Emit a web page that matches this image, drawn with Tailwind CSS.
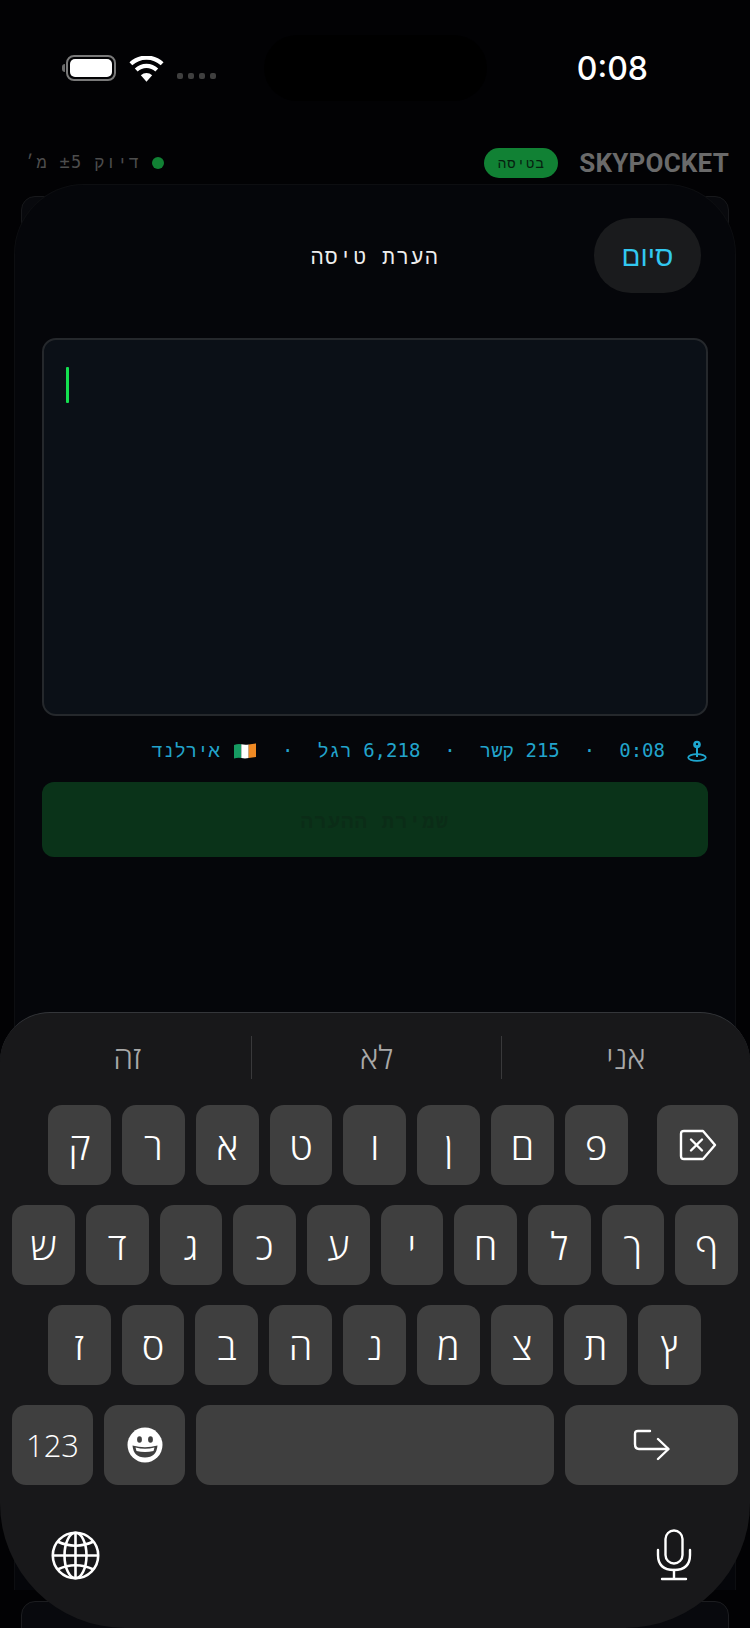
<!DOCTYPE html>
<html lang="he" dir="rtl">
<head>
  <meta charset="UTF-8" />
  <meta name="viewport" content="width=device-width, initial-scale=1.0"/>
  <title>SkyPocket</title>
  <script src="https://cdn.jsdelivr.net/npm/@tailwindcss/browser@4"></script>
</head>
<body class="bg-[#020204]">
<div class="relative w-[750px] h-[1628px] overflow-hidden bg-[#020204] font-['Liberation_Sans',sans-serif]">

  <!-- status bar -->
  <div class="absolute left-[264px] top-[35px] w-[223px] h-[66px] rounded-[33px] bg-black"></div>
  <div class="relative mt-[48px] h-[40px] flex items-center justify-between pr-[102px] pl-[62px]">
    <span class="font-['Inter',sans-serif] text-[32px] leading-[40px] font-medium text-white mt-[2px]" dir="ltr">0:08</span>
    <div class="flex items-center gap-[13px]">
      <div class="flex gap-[5px] mt-[16px]">
        <span class="w-[6px] h-[6px] rounded-[2px] bg-[#3f3f3f]"></span>
        <span class="w-[6px] h-[6px] rounded-[2px] bg-[#3f3f3f]"></span>
        <span class="w-[6px] h-[6px] rounded-[2px] bg-[#3f3f3f]"></span>
        <span class="w-[6px] h-[6px] rounded-[2px] bg-[#3f3f3f]"></span>
      </div>
      <svg width="35" height="26" viewBox="0 0 34 25" class="mt-[1px]">
        <path d="M17 25 L11.5 18.5 A8.5 8.5 0 0 1 22.5 18.5 Z" fill="#fff"/>
        <path d="M7 13.5 A14.5 14.5 0 0 1 27 13.5" fill="none" stroke="#fff" stroke-width="4"/>
        <path d="M1.8 7.5 A22 22 0 0 1 32.2 7.5" fill="none" stroke="#fff" stroke-width="4"/>
      </svg>
      <div class="flex items-center gap-[1px]" dir="ltr">
        <span class="w-[3px] h-[8px] rounded-l-[3px] bg-[#6b6b6b]"></span>
        <div class="w-[50px] h-[26px] rounded-[8px] border-2 border-[#7a7a7a] p-[2px]">
          <div class="w-full h-full rounded-[5px] bg-white"></div>
        </div>
      </div>
    </div>
  </div>

  <!-- app top bar, dimmed behind the sheet -->
  <div class="mt-[60px] h-[30px] flex items-center justify-between pr-[21px] pl-[25px]">
    <div class="flex items-center gap-[21px]">
      <span class="font-['Roboto',sans-serif] font-bold text-[26px] leading-[30px] tracking-[0.2px] text-[#6a6a6a]" dir="ltr">SKYPOCKET</span>
      <span class="w-[74px] h-[30px] rounded-full bg-[#118134] flex items-center justify-center font-['DejaVu_Sans_Mono','Liberation_Mono',monospace] text-[14px] tracking-[1px] text-[#06200f]">בטיסה</span>
    </div>
    <div class="flex items-center gap-[12px]">
      <span class="w-[12px] h-[12px] rounded-full bg-[#118134]"></span>
      <span class="font-['DejaVu_Sans_Mono','Liberation_Mono',monospace] text-[17px] tracking-[1.3px] text-[#4d4d4d]">דיוק ±5 מ׳</span>
    </div>
  </div>

  <!-- cards behind the sheet -->
  <div class="mt-[18px] mx-[21px] h-[1393px] rounded-[14px] border border-[#17181b] bg-[#08090d]"></div>
  <div class="mt-[12px] mx-[21px] h-[60px] rounded-[14px] border border-[#1c1d20] bg-[#08090d]"></div>

  <!-- note sheet -->
  <div class="absolute left-[14px] right-[14px] top-[184px] bottom-[38px] rounded-t-[70px] border border-b-0 border-[#0d0e11] bg-[#05060a]">
    <div class="mt-[33px] px-[34px] flex items-center justify-between">
      <div class="w-[107px] h-[75px] rounded-[37px] bg-[#1a1b1d] flex items-center justify-center text-[28px] text-[#32c8f0] pt-[2px]">סיום</div>
      <h1 class="font-['DejaVu_Sans_Mono','Liberation_Mono',monospace] text-[21px] tracking-[1.7px] text-[#eeeeee] pt-[5px]">הערת טיסה</h1>
      <div class="w-[107px]"></div>
    </div>

    <div class="mt-[45px] mx-[27px] h-[378px] rounded-[14px] border-2 border-[#25282c] bg-[#0b1017] pt-[27px] px-[22px] flex justify-end items-start">
      <span class="w-[3px] h-[36px] rounded-[1px] bg-[#14e050]"></span>
    </div>

    <div class="mt-[24px] mr-[28px] h-[21px] flex items-center font-['DejaVu_Sans_Mono','Liberation_Mono',monospace] text-[19px] text-[#22a4cc]">
      <svg width="20" height="22" viewBox="0 0 20 22" class="ml-[22px]">
        <circle cx="10" cy="4.5" r="3.8" fill="#1ea7d0"/>
        <circle cx="10" cy="4.2" r="1.1" fill="#05060a"/>
        <path d="M10 8v9" stroke="#1ea7d0" stroke-width="2"/>
        <ellipse cx="10" cy="17.5" rx="8.8" ry="3.4" fill="none" stroke="#1ea7d0" stroke-width="1.8"/>
      </svg>
      <span dir="ltr">0:08</span>
      <span class="mx-[24px]">·</span>
      <span>215 קשר</span>
      <span class="mx-[24px]">·</span>
      <span>6,218 רגל</span>
      <span class="mr-[24px] ml-[26px]">·</span>
      <svg width="22" height="16" viewBox="0 0 22 16" class="ml-[14px]">
        <path d="M0 2 Q4 0.5 7.3 1.2 V15 Q4 14.2 0 15.5 Z" fill="#169b62"/>
        <path d="M7.3 1.2 Q11 2 14.7 1.4 V15 Q11 15.8 7.3 15 Z" fill="#ffffff"/>
        <path d="M14.7 1.4 Q18 0.8 22 0.4 V14 Q18 14.4 14.7 15 Z" fill="#f08a24"/>
      </svg>
      <span>אירלנד</span>
    </div>

    <div class="mt-[21px] mx-[27px] h-[75px] rounded-[12px] bg-[#0a3319] pt-[3px] flex items-center justify-center font-['DejaVu_Sans_Mono','Liberation_Mono',monospace] font-bold text-[20px] tracking-[1.5px] text-[#0b2c17]">שמירת ההערה</div>
  </div>

  <!-- keyboard -->
  <div class="absolute left-0 right-0 top-[1012px] bottom-0 rounded-t-[50px] rounded-b-[125px] border-t border-[#34363a] bg-[#18181a] text-white font-[350] font-['Open_Sans','Liberation_Sans',sans-serif]">
    <div class="mt-[22px] h-[44px] pl-[3px] flex items-center text-[32px] text-[#a8a8a8]">
      <span class="flex-1 text-center">אני</span>
      <span class="w-[1px] h-[43px] bg-[#39393b]"></span>
      <span class="flex-1 text-center">לא</span>
      <span class="w-[1px] h-[43px] bg-[#39393b]"></span>
      <span class="flex-1 text-center">זה</span>
    </div>

    <div class="mt-[26px] flex flex-col gap-[20px] text-[38px]">
      <div class="h-[80px] flex gap-[11px] pr-[12px]">
        <div class="w-[81px] ml-[18.4px] rounded-[14px] bg-[#3f3f3f] flex items-center justify-center">
          <svg width="38" height="32" viewBox="0 0 38 32" fill="none" stroke="#fff" stroke-width="2.4" stroke-linejoin="round" stroke-linecap="round">
            <path d="M5 2 H24 L36 16 L24 30 H5 Q2 30 2 27 V5 Q2 2 5 2 Z"/>
            <path d="M12 10.5 L23 21.5 M23 10.5 L12 21.5"/>
          </svg>
        </div>
        <div class="w-[62.8px] rounded-[14px] bg-[#3f3f3f] flex items-center justify-center">פ</div>
        <div class="w-[62.8px] rounded-[14px] bg-[#3f3f3f] flex items-center justify-center">ם</div>
        <div class="w-[62.8px] rounded-[14px] bg-[#3f3f3f] flex items-center justify-center">ן</div>
        <div class="w-[62.8px] rounded-[14px] bg-[#3f3f3f] flex items-center justify-center">ו</div>
        <div class="w-[62.8px] rounded-[14px] bg-[#3f3f3f] flex items-center justify-center">ט</div>
        <div class="w-[62.8px] rounded-[14px] bg-[#3f3f3f] flex items-center justify-center">א</div>
        <div class="w-[62.8px] rounded-[14px] bg-[#3f3f3f] flex items-center justify-center">ר</div>
        <div class="w-[62.8px] rounded-[14px] bg-[#3f3f3f] flex items-center justify-center">ק</div>
      </div>
      <div class="h-[80px] flex gap-[11px] pr-[12px]">
        <div class="w-[62.7px] rounded-[14px] bg-[#3f3f3f] flex items-center justify-center">ף</div>
        <div class="w-[62.7px] rounded-[14px] bg-[#3f3f3f] flex items-center justify-center">ך</div>
        <div class="w-[62.7px] rounded-[14px] bg-[#3f3f3f] flex items-center justify-center">ל</div>
        <div class="w-[62.7px] rounded-[14px] bg-[#3f3f3f] flex items-center justify-center">ח</div>
        <div class="w-[62.7px] rounded-[14px] bg-[#3f3f3f] flex items-center justify-center">י</div>
        <div class="w-[62.7px] rounded-[14px] bg-[#3f3f3f] flex items-center justify-center">ע</div>
        <div class="w-[62.7px] rounded-[14px] bg-[#3f3f3f] flex items-center justify-center">כ</div>
        <div class="w-[62.7px] rounded-[14px] bg-[#3f3f3f] flex items-center justify-center">ג</div>
        <div class="w-[62.7px] rounded-[14px] bg-[#3f3f3f] flex items-center justify-center">ד</div>
        <div class="w-[62.7px] rounded-[14px] bg-[#3f3f3f] flex items-center justify-center">ש</div>
      </div>
      <div class="h-[80px] flex gap-[11px] pr-[49px]">
        <div class="w-[62.8px] rounded-[14px] bg-[#3f3f3f] flex items-center justify-center">ץ</div>
        <div class="w-[62.8px] rounded-[14px] bg-[#3f3f3f] flex items-center justify-center">ת</div>
        <div class="w-[62.8px] rounded-[14px] bg-[#3f3f3f] flex items-center justify-center">צ</div>
        <div class="w-[62.8px] rounded-[14px] bg-[#3f3f3f] flex items-center justify-center">מ</div>
        <div class="w-[62.8px] rounded-[14px] bg-[#3f3f3f] flex items-center justify-center">נ</div>
        <div class="w-[62.8px] rounded-[14px] bg-[#3f3f3f] flex items-center justify-center">ה</div>
        <div class="w-[62.8px] rounded-[14px] bg-[#3f3f3f] flex items-center justify-center">ב</div>
        <div class="w-[62.8px] rounded-[14px] bg-[#3f3f3f] flex items-center justify-center">ס</div>
        <div class="w-[62.8px] rounded-[14px] bg-[#3f3f3f] flex items-center justify-center">ז</div>
      </div>
      <div class="h-[80px] flex gap-[11px] pr-[12px]">
        <div class="w-[173px] rounded-[14px] bg-[#3f3f3f] flex items-center justify-center">
          <svg width="37" height="32" viewBox="0 0 37 32" fill="none" stroke="#fff" stroke-width="2.4" stroke-linecap="round" stroke-linejoin="round">
            <path d="M17 2 H5 Q2 2 2 5 V15 Q2 20 6 20 H35"/>
            <path d="M25 10 L35.5 20 L25 30"/>
          </svg>
        </div>
        <div class="w-[358px] rounded-[14px] bg-[#3f3f3f]"></div>
        <div class="w-[81px] rounded-[14px] bg-[#3f3f3f] flex items-center justify-center">
          <svg width="36" height="36" viewBox="0 0 36 36">
            <circle cx="18" cy="18" r="17.5" fill="#fff"/>
            <ellipse cx="12.5" cy="12.5" rx="2.4" ry="3.3" fill="#3f3f3f"/>
            <ellipse cx="23.5" cy="12.5" rx="2.4" ry="3.3" fill="#3f3f3f"/>
            <path d="M5.5 18.5 Q18 22 30.5 18.5 Q29.5 30.5 18 30.5 Q6.5 30.5 5.5 18.5 Z" fill="#3f3f3f"/>
            <path d="M8.5 20.5 Q18 23 27.5 20.5 L26.5 24 Q18 26 9.5 24 Z" fill="#fff"/>
          </svg>
        </div>
        <div class="w-[81px] rounded-[14px] bg-[#3f3f3f] flex items-center justify-center text-[31px]" dir="ltr">123</div>
      </div>
    </div>

    <div class="mt-[44px] pr-[58px] pl-[51px] flex items-center justify-between">
      <svg width="36" height="52" viewBox="0 0 36 52" fill="none" stroke="#fff" stroke-width="2.4" stroke-linecap="round">
        <rect x="9.5" y="1.5" width="17" height="33" rx="8.5"/>
        <path d="M2 21 V26 Q2 41 18 41 Q34 41 34 26 V21"/>
        <path d="M18 41 V50 M6 50 H30"/>
      </svg>
      <svg width="49" height="49" viewBox="0 0 49 49" fill="none" stroke="#fff" stroke-width="2.6">
        <circle cx="24.5" cy="24.5" r="22.7"/>
        <ellipse cx="24.5" cy="24.5" rx="11" ry="22.7"/>
        <path d="M24.5 2 V47 M2 24.5 H47"/>
        <path d="M6.5 10.5 Q24.5 19 42.5 10.5 M6.5 38.5 Q24.5 30 42.5 38.5"/>
      </svg>
    </div>
  </div>
</div>
</body>
</html>
